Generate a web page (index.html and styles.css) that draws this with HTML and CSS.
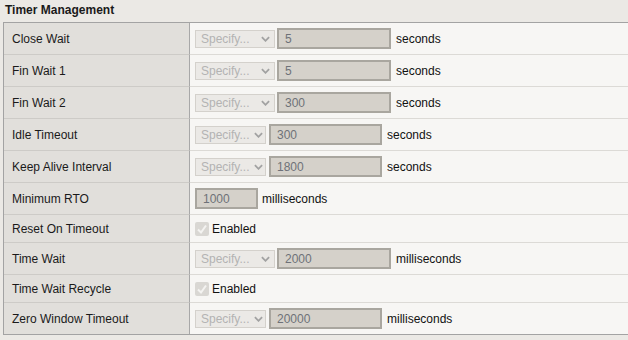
FILE: index.html
```html
<!DOCTYPE html>
<html lang="en">
<head>
  <meta charset="UTF-8" />
  <title>Timer Management</title>
  <link rel="stylesheet" href="styles.css">
</head>
<body>
  <div class="panel">
    <!-- Section heading -->
    <div class="section-title">Timer Management</div>

    <table class="settings">
      <tr>
        <th>Close Wait</th>
        <td>
          <div class="field">
            <div class="select-wrap"><select disabled><option>Specify...</option></select><svg class="chev" viewBox="0 0 10 6"><path d="M1 1 L5 5 L9 1"/></svg></div>
            <input class="num" type="text" value="5" disabled>
            <span class="unit">seconds</span>
          </div>
        </td>
      </tr>
      <tr>
        <th>Fin Wait 1</th>
        <td>
          <div class="field">
            <div class="select-wrap"><select disabled><option>Specify...</option></select><svg class="chev" viewBox="0 0 10 6"><path d="M1 1 L5 5 L9 1"/></svg></div>
            <input class="num" type="text" value="5" disabled>
            <span class="unit">seconds</span>
          </div>
        </td>
      </tr>
      <tr>
        <th>Fin Wait 2</th>
        <td>
          <div class="field">
            <div class="select-wrap"><select disabled><option>Specify...</option></select><svg class="chev" viewBox="0 0 10 6"><path d="M1 1 L5 5 L9 1"/></svg></div>
            <input class="num" type="text" value="300" disabled>
            <span class="unit">seconds</span>
          </div>
        </td>
      </tr>
      <tr>
        <th>Idle Timeout</th>
        <td>
          <div class="field">
            <div class="select-wrap narrow"><select disabled><option>Specify...</option></select><svg class="chev" viewBox="0 0 10 6"><path d="M1 1 L5 5 L9 1"/></svg></div>
            <input class="num" type="text" value="300" disabled>
            <span class="unit">seconds</span>
          </div>
        </td>
      </tr>
      <tr>
        <th>Keep Alive Interval</th>
        <td>
          <div class="field">
            <div class="select-wrap narrow"><select disabled><option>Specify...</option></select><svg class="chev" viewBox="0 0 10 6"><path d="M1 1 L5 5 L9 1"/></svg></div>
            <input class="num" type="text" value="1800" disabled>
            <span class="unit">seconds</span>
          </div>
        </td>
      </tr>
      <tr>
        <th>Minimum RTO</th>
        <td>
          <div class="field">
            <input class="num short" type="text" value="1000" disabled>
            <span class="unit">milliseconds</span>
          </div>
        </td>
      </tr>
      <tr>
        <th>Reset On Timeout</th>
        <td>
          <div class="field check-row">
            <span class="check"><svg viewBox="0 0 14 14"><path d="M3 7.5 L6 10.5 L11 3.5"/></svg></span>
            <span class="unit">Enabled</span>
          </div>
        </td>
      </tr>
      <tr>
        <th>Time Wait</th>
        <td>
          <div class="field">
            <div class="select-wrap"><select disabled><option>Specify...</option></select><svg class="chev" viewBox="0 0 10 6"><path d="M1 1 L5 5 L9 1"/></svg></div>
            <input class="num" type="text" value="2000" disabled>
            <span class="unit">milliseconds</span>
          </div>
        </td>
      </tr>
      <tr>
        <th>Time Wait Recycle</th>
        <td>
          <div class="field check-row">
            <span class="check"><svg viewBox="0 0 14 14"><path d="M3 7.5 L6 10.5 L11 3.5"/></svg></span>
            <span class="unit">Enabled</span>
          </div>
        </td>
      </tr>
      <tr class="last">
        <th>Zero Window Timeout</th>
        <td>
          <div class="field">
            <div class="select-wrap narrow"><select disabled><option>Specify...</option></select><svg class="chev" viewBox="0 0 10 6"><path d="M1 1 L5 5 L9 1"/></svg></div>
            <input class="num" type="text" value="20000" disabled>
            <span class="unit">milliseconds</span>
          </div>
        </td>
      </tr>
    </table>
  </div>
</body>
</html>
```

FILE: styles.css
```css
body {
  margin: 0;
  background: #ebe9e5;
  font-family: "Liberation Sans", Arial, sans-serif;
  font-size: 12px;
  color: #1a1a1a;
  overflow: hidden;
}

.panel {
  padding-left: 3px;
}

/* Heading */
.section-title {
  font-weight: bold;
  line-height: 21px;
  height: 22px;
  padding-left: 2px;
}

/* Settings table */
.settings {
  width: 100%;
  border-collapse: separate;
  border-spacing: 0;
  border-top: 1px solid #a3a3a3;
  border-left: 1px solid #a3a3a3;
  border-bottom: 1px solid #a3a3a3;
}
.settings th {
  width: 177px;
  padding: 0 0 0 8px;
  text-align: left;
  font-weight: normal;
  background: #e1dfdb;
  border-right: 1px solid #a8a8a8;
  border-bottom: 1px solid #cdcbc7;
  vertical-align: middle;
}
.settings td {
  padding: 0 0 0 5px;
  background: #f7f6f4;
  border-bottom: 1px solid #dcdad6;
}
.settings tr.last th,
.settings tr.last td {
  border-bottom: none;
}

.field {
  height: 31px;
  display: flex;
  align-items: center;
}
.check-row {
  height: 27px;
}

/* Disabled dropdown */
.select-wrap {
  position: relative;
  width: 80px;
  height: 18px;
  margin-right: 2px;
}
.select-wrap.narrow {
  width: 71px;
  margin-right: 3px;
}
.select-wrap select {
  appearance: none;
  -webkit-appearance: none;
  box-sizing: border-box;
  width: 100%;
  height: 100%;
  margin: 0;
  padding: 0 0 0 5px;
  border: 1px solid #d4d1cc;
  border-radius: 0;
  background: #ebe9e6;
  color: #b3b3b3;
  font-family: inherit;
  font-size: 12px;
  opacity: 1;
}
.chev {
  position: absolute;
  right: 5px;
  top: 6px;
  width: 9px;
  height: 6px;
  fill: none;
  stroke: #a2a2a2;
  stroke-width: 2;
}
.narrow .chev {
  right: 3px;
}

/* Disabled number box */
.num {
  box-sizing: border-box;
  width: 114px;
  height: 21px;
  margin: 0 5px 0 0;
  padding: 0 0 0 6px;
  border: 2px solid #a9a69f;
  border-radius: 0;
  background: #d5d1ca;
  color: #6e7178;
  font-family: inherit;
  font-size: 12px;
  -webkit-text-fill-color: #6e7178;
  opacity: 1;
}
.narrow + .num {
  width: 113px;
}
.num.short {
  width: 63px;
  margin-right: 4px;
}

.unit {
  color: #111;
}

/* Disabled checked checkbox */
.check {
  width: 14px;
  height: 14px;
  margin-right: 3px;
  border-radius: 2px;
  background: #d9d7d3;
  display: flex;
}
.check svg {
  width: 14px;
  height: 14px;
  fill: none;
  stroke: #f4f3f1;
  stroke-width: 2;
}
```
